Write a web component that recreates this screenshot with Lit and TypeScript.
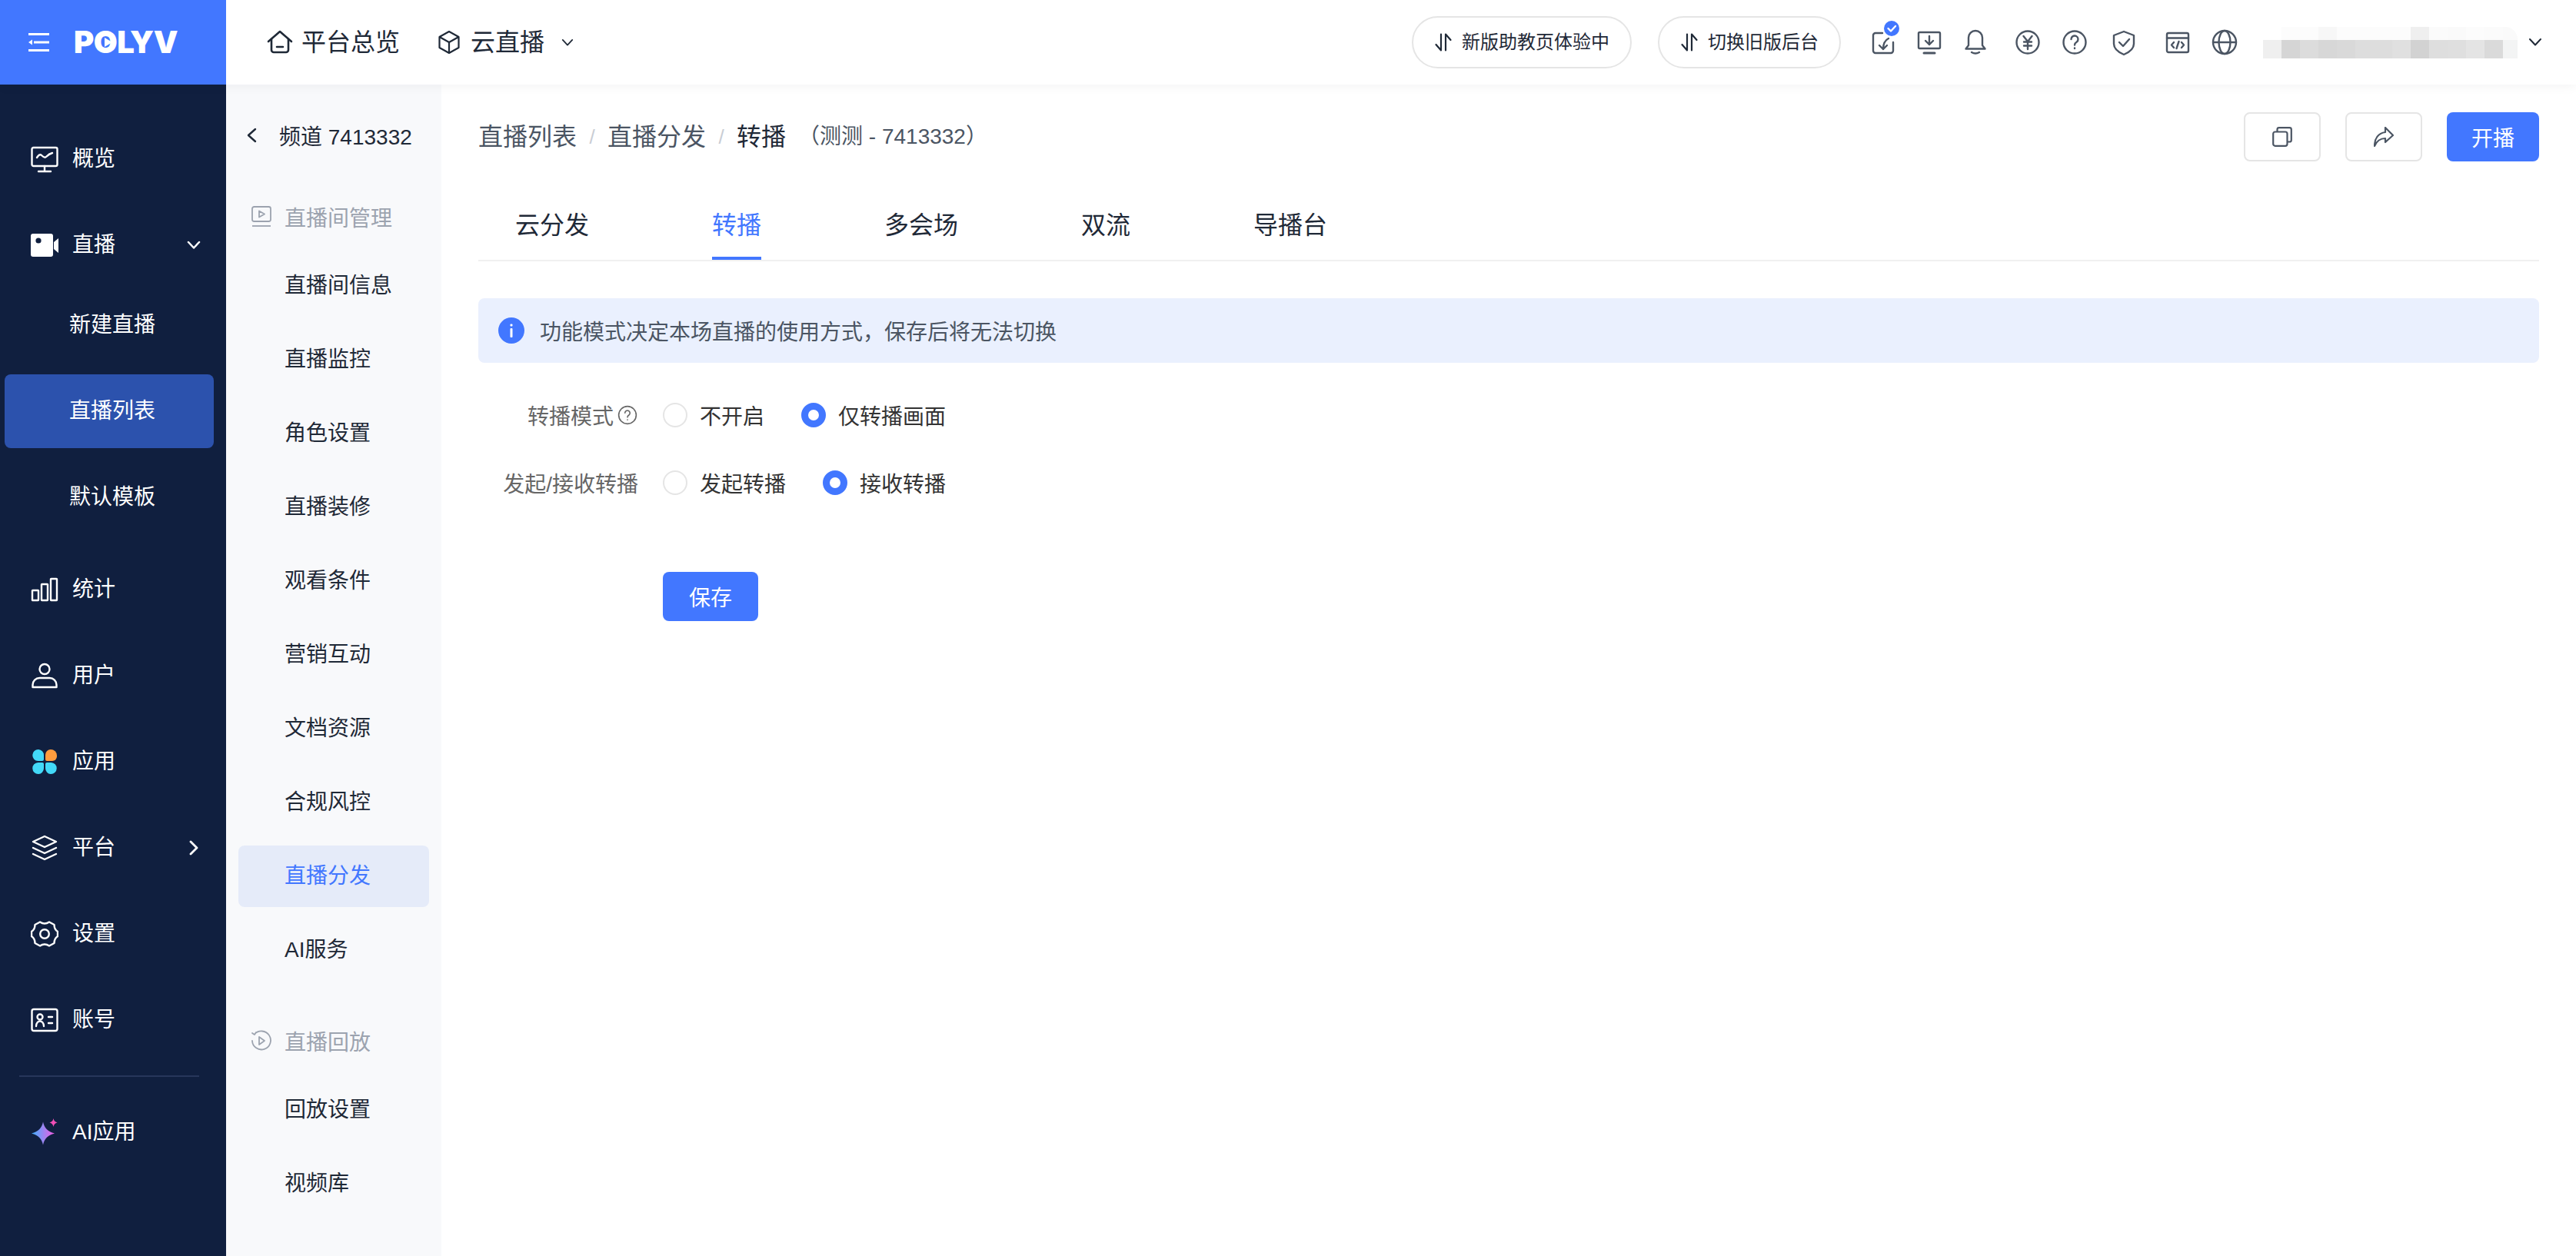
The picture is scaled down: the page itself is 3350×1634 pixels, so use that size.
import { LitElement, css, html } from 'lit';
import { customElement } from 'lit/decorators.js';

const box = (body: unknown, cls = 'ico') =>
  html`<svg class=${cls} viewBox="0 0 36 36" fill="none" stroke="currentColor" stroke-width="2.4" stroke-linecap="round" stroke-linejoin="round">${body}</svg>`;

const navIcons: Record<string, unknown> = {
  overview: box(html`<svg x="0" y="0" width="36" height="36" viewBox="0 0 36 36" overflow="visible"><rect x="1.5" y="3" width="33" height="24" rx="2"></rect><path d="M8 16c2-3 4-5 6-3s4 4 6 2 4-4 8-5"></path><path d="M18 27v6M10 34h16"></path></svg>`),
  live: box(html`<svg width="36" height="36" viewBox="0 0 36 36"><rect x="0" y="3" width="29" height="30" rx="3" fill="currentColor" stroke="none"></rect><path d="M30 14l6-5v19l-6-5z" fill="currentColor" stroke="none"></path><circle cx="10" cy="12" r="3.6" fill="#101f3f" stroke="none"></circle></svg>`),
  stats: box(html`<svg width="36" height="36" viewBox="0 0 36 36"><rect x="2" y="19" width="8" height="13" rx=".6"></rect><rect x="14" y="11" width="8" height="21" rx=".6"></rect><rect x="26" y="4" width="8" height="28" rx=".6"></rect></svg>`),
  user: box(html`<svg width="36" height="36" viewBox="0 0 36 36"><circle cx="18" cy="9.5" r="6.5"></circle><path d="M2.5 33v-3a9 9 0 0 1 9-9h13a9 9 0 0 1 9 9v3z"></path></svg>`),
  apps: box(html`<svg width="36" height="36" viewBox="0 0 36 36" stroke="none">
    <path d="M10 2a7.5 7.5 0 0 1 7 7.5V15a2 2 0 0 1-2 2H9.5a7.5 7.5 0 0 1 .5-15z" fill="#42d9f8"></path>
    <path d="M26 2a8 8 0 0 1 8 8v1a6 6 0 0 1-6 6h-7a2 2 0 0 1-2-2V9a7 7 0 0 1 7-7z" fill="#ff9c3e"></path>
    <path d="M10 34a7.5 7.5 0 0 0 7-7.500V21a2 2 0 0 0-2-2H9.500a7.500 7.500 0 0 0 .5 15z" fill="#42d9f8"></path>
    <path d="M26 34a7.500 7.500 0 0 1-7-7.500V21a2 2 0 0 1 2-2h5.500a7.500 7.500 0 0 1-.5 15z" fill="#42d9f8"></path>
  </svg>`),
  platform: box(html`<svg width="36" height="36" viewBox="0 0 36 36"><path d="M18 3l15 7-15 7-15-7z"></path><path d="M3 18l15 7 15-7M3 26l15 7 15-7"></path></svg>`),
  settings: box(html`<svg width="36" height="36" viewBox="0 0 36 36"><path d="M12 2.500q6 4 12 0l6.500 3.500q0 6 4.500 9v6q-4.500 3-4.500 9l-6.500 3.500q-6-4-12 0l-6.500-3.500q0-6-4.500-9v-6q4.500-3 4.500-9z"></path><circle cx="18" cy="18" r="5.800"></circle></svg>`),
  account: box(html`<svg width="36" height="36" viewBox="0 0 36 36"><rect x="1.500" y="4" width="33" height="28" rx="2.500"></rect><circle cx="12" cy="14" r="3.500"></circle><path d="M7 26c0-4 2.500-6.500 5-6.500s5 2.500 5 6.500M23 14h5M23 22h5"></path></svg>`),
  ai: box(html`<svg width="36" height="36" viewBox="0 0 36 36" stroke="none">
    <defs><linearGradient id="aiGrad" x1="0" y1="0" x2="1" y2="0"><stop offset="0" stop-color="#3fb0ff"></stop><stop offset="1" stop-color="#f45ce4"></stop></linearGradient></defs>
    <path d="M16 4.500c1.500 7.500 6 12.500 15 15-9 2.500-13.500 7-15 15-1.500-8-6-12.500-15-15 9-2.500 13.500-7.500 15-15z" fill="url(#aiGrad)"></path>
    <path d="M29.500 0c.6 3 1.800 4.400 5 5.500-3.200 1-4.400 2.500-5 5.500-.6-3-1.800-4.500-5-5.500 3.200-1.100 4.400-2.500 5-5.500z" fill="#f04fb5"></path>
  </svg>`),
};

const topIcons: { gap: number; body: unknown }[] = [
  {
    gap: 37,
    body: html`<svg width="36" height="36" viewBox="0 0 36 36" overflow="visible"><path d="M17 6H8a3 3 0 0 0-3 3v20a3 3 0 0 0 3 3h20a3 3 0 0 0 3-3V18"></path><path d="M25 13c-4 2-7 6-7 14M13 22l5 5 5-5"></path><circle cx="29" cy="0" r="10" fill="#4277ff" stroke="none"></circle><path d="M24.500 0l3.500 3.500 6-6.500" stroke="#fff"></path></svg>`,
  },
  {
    gap: 24,
    body: html`<svg width="36" height="36" viewBox="0 0 36 36"><rect x="4" y="5" width="28" height="21" rx="1.500"></rect><path d="M18 10v11M13 16l5 5 5-5"></path><path d="M11 32h14" stroke-width="3"></path></svg>`,
  },
  {
    gap: 24,
    body: html`<svg width="36" height="36" viewBox="0 0 36 36"><path d="M9 22V12a9 9 0 0 1 18 0v10l3.500 4.500h-25z"></path><path d="M13 31q5 3 10 0"></path></svg>`,
  },
  {
    gap: 32,
    body: html`<svg width="36" height="36" viewBox="0 0 36 36"><circle cx="18" cy="18" r="14.500"></circle><path d="M12.500 10l5.500 7 5.500-7M18 17v10M13 17.500h10M13 22.500h10"></path></svg>`,
  },
  {
    gap: 25,
    body: html`<svg width="36" height="36" viewBox="0 0 36 36"><circle cx="18" cy="18" r="14.500"></circle><path d="M13.500 14a4.500 4.500 0 1 1 7 3.700c-1.600 1-2.500 2-2.500 3.800M18 25.500v.5"></path></svg>`,
  },
  {
    gap: 28,
    body: html`<svg width="36" height="36" viewBox="0 0 36 36"><path d="M18 4l13 5v11c0 7-6 11-13 14-7-3-13-7-13-14V9z"></path><path d="M12 18l5 5 8-9"></path></svg>`,
  },
  {
    gap: 34,
    body: html`<svg width="36" height="36" viewBox="0 0 36 36"><rect x="4" y="6" width="28" height="25" rx="2"></rect><path d="M4 12.500h28M13 18l-3 3.500 3 3.500M23 18l3 3.500-3 3.500M19.500 17l-3 9"></path></svg>`,
  },
  {
    gap: 25,
    body: html`<svg width="36" height="36" viewBox="0 0 36 36"><circle cx="18" cy="18" r="15"></circle><ellipse cx="18" cy="18" rx="7.500" ry="15"></ellipse><path d="M3 18h30"></path></svg>`,
  },
];

const swapIcon = html`<svg class="swap" viewBox="0 0 24 24" fill="none" stroke="currentColor" stroke-width="2.200" stroke-linecap="round" stroke-linejoin="round"><path d="M9 1.500v21L2.500 15M15 22.500v-21L21.500 9"></path></svg>`;

const chevronDown = html`<svg class="chev" viewBox="0 0 18 12" fill="none" stroke="currentColor" stroke-width="2" stroke-linecap="round" stroke-linejoin="round"><path d="M2 2l7 7.500L16 2"></path></svg>`;

// blurred account name, sampled cell by cell
const mosaicTop = ['#ffffff', '#fcfcfc', '#fcfcfc', '#f7f7f7', '#fcfcfc', '#fcfcfc', '#fcfcfc', '#fcfcfc', '#efefef', '#fbfbfb', '#fafafa', '#fcfcfc', '#fbfbfb', '#fafafa'];
const mosaicBottom = ['#efefef', '#d5d5d5', '#dcdcdc', '#d7d7d7', '#d9d9d9', '#dddddd', '#dddddd', '#e0e0e0', '#d2d2d2', '#dedede', '#dfdfdf', '#e4e4e4', '#dadada', '#f3f4f4'];

@customElement('app-root')
export class AppRoot extends LitElement {
  static styles = css`
    :host {
      display: flex;
      flex-direction: column;
      height: 1634px;
      overflow: hidden;
      background: #fff;
      color: #1f2937;
      font-family: 'Liberation Sans', 'Noto Sans CJK SC', sans-serif;
      font-size: 28px;
    }
    svg { display: block; flex: none; }
    .top {
      position: relative;
      z-index: 2;
      flex: none;
      display: flex;
      align-items: center;
      height: 110px;
      padding-right: 44px;
      background: #fff;
      box-shadow: 0 2px 14px rgba(17, 24, 39, 0.05);
    }
    .brand {
      align-self: stretch;
      width: 294px;
      flex: none;
      display: flex;
      align-items: center;
      gap: 32px;
      padding-left: 37px;
      box-sizing: border-box;
      background: #4277ff;
      color: #fff;
    }
    .menu-ico { width: 27px; height: 26px; }
    .logo {
      position: relative;
      font-family: Inter, sans-serif;
      font-weight: 900;
      font-size: 40px;
      line-height: 40px;
      letter-spacing: -0.5px;
    }
    .logo-play {
      position: absolute;
      left: 40px;
      top: 14px;
      width: 0;
      height: 0;
      border-left: 10px solid #fff;
      border-top: 6px solid transparent;
      border-bottom: 6px solid transparent;
    }
    .top-link {
      display: flex;
      align-items: center;
      font-size: 32px;
      line-height: 44px;
      color: #1f2937;
    }
    .home { margin-left: 53px; gap: 11px; }
    .home svg { width: 34px; height: 32px; }
    .cube { margin-left: 50px; gap: 14px; }
    .cube svg { width: 28px; height: 32px; }
    .cube .chev { width: 16px; height: 11px; margin-left: 8px; }
    .top-right { margin-left: auto; display: flex; align-items: center; color: #4b5563; }
    .pill {
      display: flex;
      align-items: center;
      gap: 12px;
      height: 68px;
      padding: 0 27px;
      box-sizing: border-box;
      border: 2px solid #e5e5e5;
      border-radius: 34px;
      font-size: 24px;
      line-height: 32px;
      color: #1f2937;
    }
    .pill + .pill { margin-left: 34px; }
    .swap { width: 24px; height: 24px; }
    .tool svg {
      fill: none;
      stroke: #4b5563;
      stroke-width: 2.4;
      stroke-linecap: round;
      stroke-linejoin: round;
    }
    .mosaic {
      margin-left: 32px;
      overflow: hidden;
      border-top-right-radius: 16px;
    }
    .mosaic-row { display: flex; height: 17px; }
    .mosaic-row + .mosaic-row { height: 24px; }
    .mosaic-row span { width: 24px; flex: none; }
    .mosaic-row span:last-child { width: 19px; }
    .account-chev { width: 18px; height: 12px; margin-left: 14px; color: #1f2937; }

    .body { flex: 1; display: flex; min-height: 0; }
    .nav {
      width: 294px;
      flex: none;
      box-sizing: border-box;
      padding-top: 41px;
      background: #101f3f;
      color: #fff;
    }
    .nav-item {
      display: flex;
      align-items: center;
      height: 112px;
      padding: 0 33px 0 40px;
      line-height: 40px;
    }
    .ico { width: 36px; height: 36px; flex: none; }
    .nav-item .ico { margin-right: 18px; }
    .nav-item .chev { width: 18px; height: 12px; margin-left: auto; stroke-width: 2.500; }
    .nav-item .chev-right { width: 12px; height: 20px; margin-left: auto; margin-right: 3px; }
    .sub-list {
      display: flex;
      flex-direction: column;
      gap: 16px;
      margin: 0 16px 16px 6px;
    }
    .sub-item {
      height: 96px;
      padding-left: 84px;
      line-height: 96px;
      border-radius: 8px;
    }
    .sub-item.on { background: #2c52ad; }
    .nav-rule {
      height: 2px;
      margin: 16px 35px 16px 25px;
      background: #27365a;
    }

    .side {
      width: 280px;
      flex: none;
      box-sizing: border-box;
      padding: 34px 16px 0;
      background: #f8f9fb;
    }
    .back {
      display: flex;
      align-items: center;
      height: 64px;
      margin-bottom: 42px;
      padding-left: 10px;
      white-space: nowrap;
    }
    .back svg { width: 14px; height: 20px; margin-right: 29px; }
    .side-title {
      display: flex;
      align-items: center;
      height: 64px;
      margin-bottom: 18px;
      padding-left: 16px;
      color: #9ca3af;
    }
    .side-title svg { width: 28px; height: 28px; margin-right: 16px; }
    .side-title.later { margin-top: 46px; }
    .side-list { display: flex; flex-direction: column; gap: 16px; }
    .side-item {
      height: 80px;
      padding-left: 60px;
      line-height: 80px;
      border-radius: 8px;
    }
    .side-item.on { background: #e5ebf9; color: #4277ff; }

    .main { flex: 1; min-width: 0; padding: 36px 48px 0; }
    .head { display: flex; align-items: center; height: 64px; }
    .crumbs { display: flex; align-items: center; font-size: 32px; line-height: 44px; color: #4b5563; }
    .crumb-sep { width: 40px; text-align: center; font-size: 26px; color: #c9cdd4; }
    .crumb-now { color: #1f2937; }
    .crumb-note { margin-left: 16px; font-size: 28px; color: #4b5563; }
    .actions { margin-left: auto; display: flex; gap: 32px; }
    .act {
      display: flex;
      align-items: center;
      justify-content: center;
      width: 100px;
      height: 64px;
      box-sizing: border-box;
      border: 2px solid #e5e5e5;
      border-radius: 8px;
      color: #4b5563;
    }
    .act svg { width: 26px; height: 26px; }
    .btn {
      display: flex;
      align-items: center;
      justify-content: center;
      height: 64px;
      border-radius: 8px;
      background: #4277ff;
      color: #fff;
    }
    .btn.start { width: 120px; }
    .btn.save { width: 124px; margin: 88px 0 0 240px; }
    .tabs {
      display: flex;
      gap: 160px;
      margin-top: 38px;
      padding-left: 48px;
      border-bottom: 2px solid #f0f0f0;
    }
    .tab {
      position: relative;
      height: 90px;
      font-size: 32px;
      line-height: 90px;
    }
    .tab.on { color: #4277ff; }
    .tab.on::after {
      content: '';
      position: absolute;
      left: 0;
      right: 0;
      bottom: 0;
      height: 4px;
      background: #4277ff;
    }
    .alert {
      display: flex;
      align-items: center;
      gap: 20px;
      height: 84px;
      margin-top: 48px;
      padding-left: 26px;
      border-radius: 8px;
      background: #eaf0fe;
      color: #4b5563;
    }
    .alert svg { width: 34px; height: 34px; }
    .row { display: flex; align-items: center; height: 56px; }
    .row.first { margin-top: 40px; }
    .row + .row { margin-top: 32px; }
    .label {
      display: flex;
      align-items: center;
      justify-content: flex-end;
      width: 208px;
      margin-right: 32px;
      color: #666;
      white-space: nowrap;
    }
    .help { width: 26px; height: 26px; margin: 0 1px 0 5px; }
    .opt { display: flex; align-items: center; gap: 16px; color: #333; }
    .opt + .opt { margin-left: 48px; }
    .radio {
      width: 32px;
      height: 32px;
      box-sizing: border-box;
      border: 2px solid #e5e5e5;
      border-radius: 50%;
    }
    .opt.on .radio { border: 9px solid #4277ff; }
  `;

  private navItem(icon: string, label: string, trailing?: unknown) {
    return html`<div class="nav-item">${navIcons[icon]}<span>${label}</span>${trailing}</div>`;
  }

  private renderTop() {
    return html`
      <header class="top">
        <div class="brand">
          <svg class="menu-ico" viewBox="0 0 27 26" fill="#fff">
            <rect y="1" width="27" height="3"></rect>
            <path d="M0 13l5-3.500v7z"></path>
            <rect x="7" y="11.500" width="20" height="3"></rect>
            <rect y="22" width="27" height="3"></rect>
          </svg>
          <span class="logo">POLYV<i class="logo-play"></i></span>
        </div>
        <div class="top-link home">
          <svg viewBox="0 0 34 32" fill="none" stroke="currentColor" stroke-width="2.600" stroke-linecap="round" stroke-linejoin="round"><path d="M2 15L17 2l15 13"></path><path d="M6 12v14a3 3 0 0 0 3 3h16a3 3 0 0 0 3-3V12M13 22h8"></path></svg>
          平台总览
        </div>
        <div class="top-link cube">
          <svg viewBox="0 0 28 32" fill="none" stroke="currentColor" stroke-width="2.200" stroke-linejoin="round"><path d="M14 2l12.500 7v14L14 30 1.500 23V9z"></path><path d="M1.500 9L14 16l12.500-7M14 16v14"></path></svg>
          云直播
          ${chevronDown}
        </div>
        <div class="top-right">
          <div class="pill">${swapIcon}新版助教页体验中</div>
          <div class="pill">${swapIcon}切换旧版后台</div>
          ${topIcons.map(
            (t) => html`<div class="tool ico" style="margin-left:${t.gap}px">${t.body}</div>`,
          )}
          <div class="mosaic">
            <div class="mosaic-row">${mosaicTop.map((c) => html`<span style="background:${c}"></span>`)}</div>
            <div class="mosaic-row">${mosaicBottom.map((c) => html`<span style="background:${c}"></span>`)}</div>
          </div>
          <svg class="chev account-chev" viewBox="0 0 18 12" fill="none" stroke="currentColor" stroke-width="2" stroke-linecap="round" stroke-linejoin="round"><path d="M2 2l7 7.500L16 2"></path></svg>
        </div>
      </header>
    `;
  }

  private renderNav() {
    const subs = [
      { label: '新建直播' },
      { label: '直播列表', on: true },
      { label: '默认模板' },
    ];
    return html`
      <nav class="nav">
        ${this.navItem('overview', '概览')}
        ${this.navItem('live', '直播', html`<svg class="chev" viewBox="0 0 18 12" fill="none" stroke="currentColor" stroke-width="2.800" stroke-linecap="round" stroke-linejoin="round"><path d="M2 2l7 7.500L16 2"></path></svg>`)}
        <div class="sub-list">
          ${subs.map((s) => html`<div class="sub-item ${s.on ? 'on' : ''}">${s.label}</div>`)}
        </div>
        ${this.navItem('stats', '统计')}
        ${this.navItem('user', '用户')}
        ${this.navItem('apps', '应用')}
        ${this.navItem('platform', '平台', html`<svg class="chev-right" viewBox="0 0 12 20" fill="none" stroke="currentColor" stroke-width="2.800" stroke-linecap="round" stroke-linejoin="round"><path d="M2 2l8 8-8 8"></path></svg>`)}
        ${this.navItem('settings', '设置')}
        ${this.navItem('account', '账号')}
        <div class="nav-rule"></div>
        ${this.navItem('ai', 'AI应用')}
      </nav>
    `;
  }

  private renderSide() {
    const manage = ['直播间信息', '直播监控', '角色设置', '直播装修', '观看条件', '营销互动', '文档资源', '合规风控', '直播分发', 'AI服务'];
    return html`
      <aside class="side">
        <div class="back">
          <svg viewBox="0 0 14 20" fill="none" stroke="currentColor" stroke-width="2.400" stroke-linecap="round" stroke-linejoin="round"><path d="M12 2l-9 8 9 8"></path></svg>
          频道 7413332
        </div>
        <div class="side-title">
          <svg viewBox="0 0 28 28" fill="none" stroke="currentColor" stroke-width="1.800" stroke-linejoin="round"><rect x="2" y="1" width="24" height="19" rx="2.500"></rect><path d="M11 6.500l7 4-7 4z"></path><path d="M2 26h24"></path></svg>
          直播间管理
        </div>
        <div class="side-list">
          ${manage.map((m) => html`<div class="side-item ${m === '直播分发' ? 'on' : ''}">${m}</div>`)}
        </div>
        <div class="side-title later">
          <svg viewBox="0 0 28 28" fill="none" stroke="currentColor" stroke-width="1.800" stroke-linecap="round" stroke-linejoin="round"><path d="M5 5.500A12 12 0 1 1 2 14M2 4l3 2 2-3"></path><path d="M11 9l7 5-7 5z"></path></svg>
          直播回放
        </div>
        <div class="side-list">
          <div class="side-item">回放设置</div>
          <div class="side-item">视频库</div>
        </div>
      </aside>
    `;
  }

  private renderMain() {
    const tabs = ['云分发', '转播', '多会场', '双流', '导播台'];
    return html`
      <main class="main">
        <div class="head">
          <div class="crumbs">
            <span>直播列表</span><span class="crumb-sep">/</span>
            <span>直播分发</span><span class="crumb-sep">/</span>
            <span class="crumb-now">转播</span>
            <span class="crumb-note">（测测 - 7413332）</span>
          </div>
          <div class="actions">
            <div class="act">
              <svg viewBox="0 0 26 26" fill="none" stroke="currentColor" stroke-width="2.200" stroke-linejoin="round"><rect x="1.200" y="6.500" width="18.300" height="18.300" rx="2.500"></rect><path d="M6.500 6.500V3.500a2.300 2.300 0 0 1 2.300-2.300h13.700a2.300 2.300 0 0 1 2.300 2.300v13.700a2.300 2.300 0 0 1-2.300 2.300h-3"></path></svg>
            </div>
            <div class="act">
              <svg viewBox="0 0 26 26" fill="none" stroke="currentColor" stroke-width="2.200" stroke-linecap="round" stroke-linejoin="round"><path d="M15 1l10 10-10 9v-5c-7 0-11 3-14 10 0-10 5-17 14-18z"></path></svg>
            </div>
            <div class="btn start">开播</div>
          </div>
        </div>
        <div class="tabs">
          ${tabs.map((t) => html`<div class="tab ${t === '转播' ? 'on' : ''}">${t}</div>`)}
        </div>
        <div class="alert">
          <svg viewBox="0 0 34 34"><circle cx="17" cy="17" r="17" fill="#4277ff"></circle><rect x="15.500" y="14" width="3" height="12" rx="1" fill="#fff"></rect><rect x="15.500" y="8.500" width="3" height="3" rx="1" fill="#fff"></rect></svg>
          功能模式决定本场直播的使用方式，保存后将无法切换
        </div>
        <div class="row first">
          <div class="label">
            转播模式
            <svg class="help" viewBox="0 0 24 24" fill="none" stroke="currentColor" stroke-width="1.500" stroke-linecap="round"><circle cx="12" cy="12" r="10.500"></circle><path d="M9 9.500a3 3 0 1 1 4.700 2.500c-1.100.7-1.700 1.300-1.700 2.600M12 17.500v.3"></path></svg>
          </div>
          <div class="opt"><span class="radio"></span>不开启</div>
          <div class="opt on"><span class="radio"></span>仅转播画面</div>
        </div>
        <div class="row">
          <div class="label">发起/接收转播</div>
          <div class="opt"><span class="radio"></span>发起转播</div>
          <div class="opt on"><span class="radio"></span>接收转播</div>
        </div>
        <div class="btn save">保存</div>
      </main>
    `;
  }

  render() {
    return html`
      ${this.renderTop()}
      <div class="body">${this.renderNav()}${this.renderSide()}${this.renderMain()}</div>
    `;
  }
}
